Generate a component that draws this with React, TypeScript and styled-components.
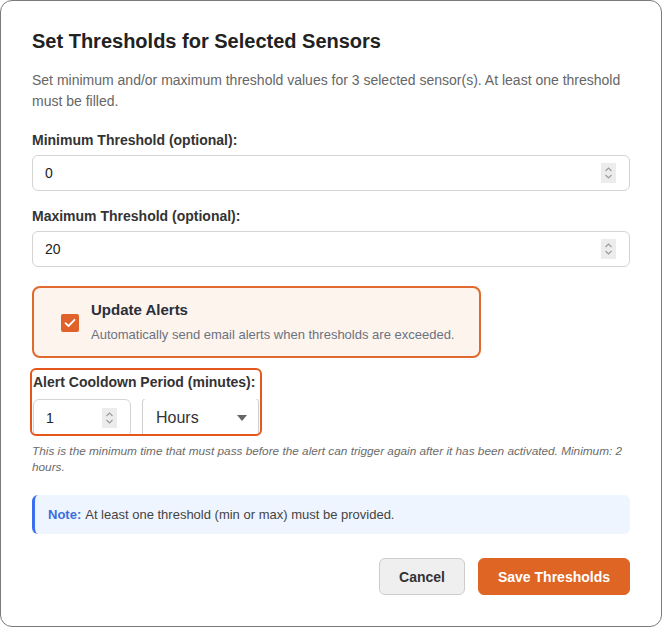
import React from 'react'
import styled, { createGlobalStyle } from 'styled-components'

const GlobalStyle = createGlobalStyle`
  html, body {
    margin: 0;
    padding: 0;
    background: #ffffff;
  }
  body {
    font-family: "Liberation Sans", Arial, sans-serif;
  }
  * {
    box-sizing: border-box;
  }
`

const Dialog = styled.div`
  width: 662px;
  height: 627px;
  border: 1px solid #7a7a7a;
  border-radius: 12px;
  background: #fff;
  padding: 28px 31px 0 31px;
  display: flex;
  flex-direction: column;
`

const Title = styled.h2`
  margin: 0 0 17px;
  font-size: 20px;
  line-height: 24px;
  font-weight: 700;
  color: #222;
`

const Description = styled.p`
  margin: 0 0 20px;
  font-size: 14px;
  line-height: 21px;
  color: #666;
`

const Field = styled.div<{ $gap?: number }>`
  display: flex;
  flex-direction: column;
  margin-bottom: ${(p) => p.$gap ?? 17}px;
`

const Label = styled.label`
  font-size: 14px;
  line-height: 17px;
  font-weight: 700;
  color: #333;
  margin-bottom: 6px;
`

const NumberBox = styled.div<{ $width?: string }>`
  display: flex;
  align-items: center;
  width: ${(p) => p.$width ?? '100%'};
  height: 36px;
  border: 1px solid #d4d4d4;
  border-radius: 6px;
  padding: 0 13px 0 12px;
  background: #fff;
`

const NumberInput = styled.input`
  flex: 1;
  min-width: 0;
  border: none;
  outline: none;
  padding: 0;
  font-family: inherit;
  font-size: 14px;
  color: #222;
  background: transparent;
`

const SpinnerBox = styled.span`
  display: flex;
  width: 15px;
  height: 20px;
  background: #ececec;
  align-items: center;
  justify-content: center;
`

const Spinner = () => (
  <SpinnerBox>
    <svg width="9" height="14" viewBox="0 0 9 14" fill="none" stroke="#9a9a9a" strokeWidth="1.1">
      <path d="M1.5 5 L4.5 2 L7.5 5" />
      <path d="M1.5 9 L4.5 12 L7.5 9" />
    </svg>
  </SpinnerBox>
)

const AlertCard = styled.div`
  align-self: flex-start;
  width: 449px;
  display: flex;
  align-items: center;
  gap: 12px;
  padding: 13px 12px 12px 27px;
  border: 2px solid #e0692f;
  border-radius: 8px;
  background: #fdf4ee;
  margin-bottom: 12px;
`

const CheckBox = styled.span`
  flex: none;
  width: 18px;
  height: 18px;
  border-radius: 2px;
  background: #e0622a;
  display: flex;
  align-items: center;
  justify-content: center;
`

const AlertText = styled.div`
  display: flex;
  flex-direction: column;
  gap: 7px;
  white-space: nowrap;
`

const AlertTitle = styled.span`
  font-size: 15px;
  line-height: 18px;
  font-weight: 700;
  color: #2a2f3a;
`

const AlertSub = styled.span`
  font-size: 13px;
  line-height: 18px;
  color: #6b7280;
`

const Cooldown = styled.div`
  align-self: flex-start;
  width: 228px;
  display: flex;
  flex-direction: column;
  outline: 2px solid #e5571b;
  border-radius: 4px;
  margin-bottom: 9px;
  padding-top: 4px;
`

const CooldownLabel = styled(Label)`
  margin: 0 0 8px 1px;
`

const CooldownRow = styled.div`
  display: flex;
  align-items: flex-start;
  gap: 11px;
  padding-left: 1px;
  height: 35px;
  overflow: hidden;
`

const SelectBox = styled.div`
  width: 117px;
  height: 40px;
  margin-top: -1px;
  border: 1px solid #cfcfcf;
  border-radius: 4px;
  display: flex;
  align-items: center;
  justify-content: space-between;
  padding: 0 11px 0 13px;
  font-size: 16px;
  color: #333;
`

const Help = styled.p`
  margin: 0 0 20px;
  font-size: 11.8px;
  line-height: 16px;
  font-style: italic;
  color: #6b6b6b;
`

const Note = styled.div`
  height: 39px;
  display: flex;
  align-items: center;
  padding-left: 13px;
  background: #eff5fe;
  border-left: 3px solid #3b6ff0;
  border-radius: 6px;
  font-size: 13px;
  color: #444;
  margin-bottom: 24px;
`

const NoteStrong = styled.strong`
  color: #3b6fe0;
  margin-right: 4px;
`

const Actions = styled.div`
  display: flex;
  justify-content: flex-end;
  gap: 13px;
`

const Button = styled.button<{ $primary?: boolean }>`
  height: 37px;
  padding: 0 ${(p) => (p.$primary ? 19 : 19)}px;
  border-radius: 6px;
  font-family: inherit;
  font-size: 14px;
  font-weight: 700;
  cursor: pointer;
  border: 1px solid ${(p) => (p.$primary ? '#df6525' : '#cccccc')};
  background: ${(p) => (p.$primary ? '#df6525' : '#efefef')};
  color: ${(p) => (p.$primary ? '#ffffff' : '#333333')};
`

export default function App() {
  return (
    <>
      <GlobalStyle />
      <Dialog>
        <Title>Set Thresholds for Selected Sensors</Title>
        <Description>
          Set minimum and/or maximum threshold values for 3 selected sensor(s). At least one threshold
          must be filled.
        </Description>

        <Field>
          <Label>Minimum Threshold (optional):</Label>
          <NumberBox>
            <NumberInput defaultValue="0" />
            <Spinner />
          </NumberBox>
        </Field>

        <Field $gap={19}>
          <Label>Maximum Threshold (optional):</Label>
          <NumberBox>
            <NumberInput defaultValue="20" />
            <Spinner />
          </NumberBox>
        </Field>

        <AlertCard>
          <CheckBox>
            <svg width="12" height="10" viewBox="0 0 12 10" fill="none" stroke="#fff" strokeWidth="1.8" strokeLinecap="round" strokeLinejoin="round">
              <path d="M1.5 5.2 L4.5 8 L10.5 1.8" />
            </svg>
          </CheckBox>
          <AlertText>
            <AlertTitle>Update Alerts</AlertTitle>
            <AlertSub>Automatically send email alerts when thresholds are exceeded.</AlertSub>
          </AlertText>
        </AlertCard>

        <Cooldown>
          <CooldownLabel>Alert Cooldown Period (minutes):</CooldownLabel>
          <CooldownRow>
            <NumberBox $width="98px" style={{ height: 38 }}>
              <NumberInput defaultValue="1" />
              <Spinner />
            </NumberBox>
            <SelectBox>
              <span>Hours</span>
              <svg width="10" height="6" viewBox="0 0 10 6">
                <path d="M0 0 L10 0 L5 6 Z" fill="#666" />
              </svg>
            </SelectBox>
          </CooldownRow>
        </Cooldown>

        <Help>
          This is the minimum time that must pass before the alert can trigger again after it has been activated. Minimum: 2
          hours.
        </Help>

        <Note>
          <NoteStrong>Note:</NoteStrong>At least one threshold (min or max) must be provided.
        </Note>

        <Actions>
          <Button>Cancel</Button>
          <Button $primary>Save Thresholds</Button>
        </Actions>
      </Dialog>
    </>
  )
}
